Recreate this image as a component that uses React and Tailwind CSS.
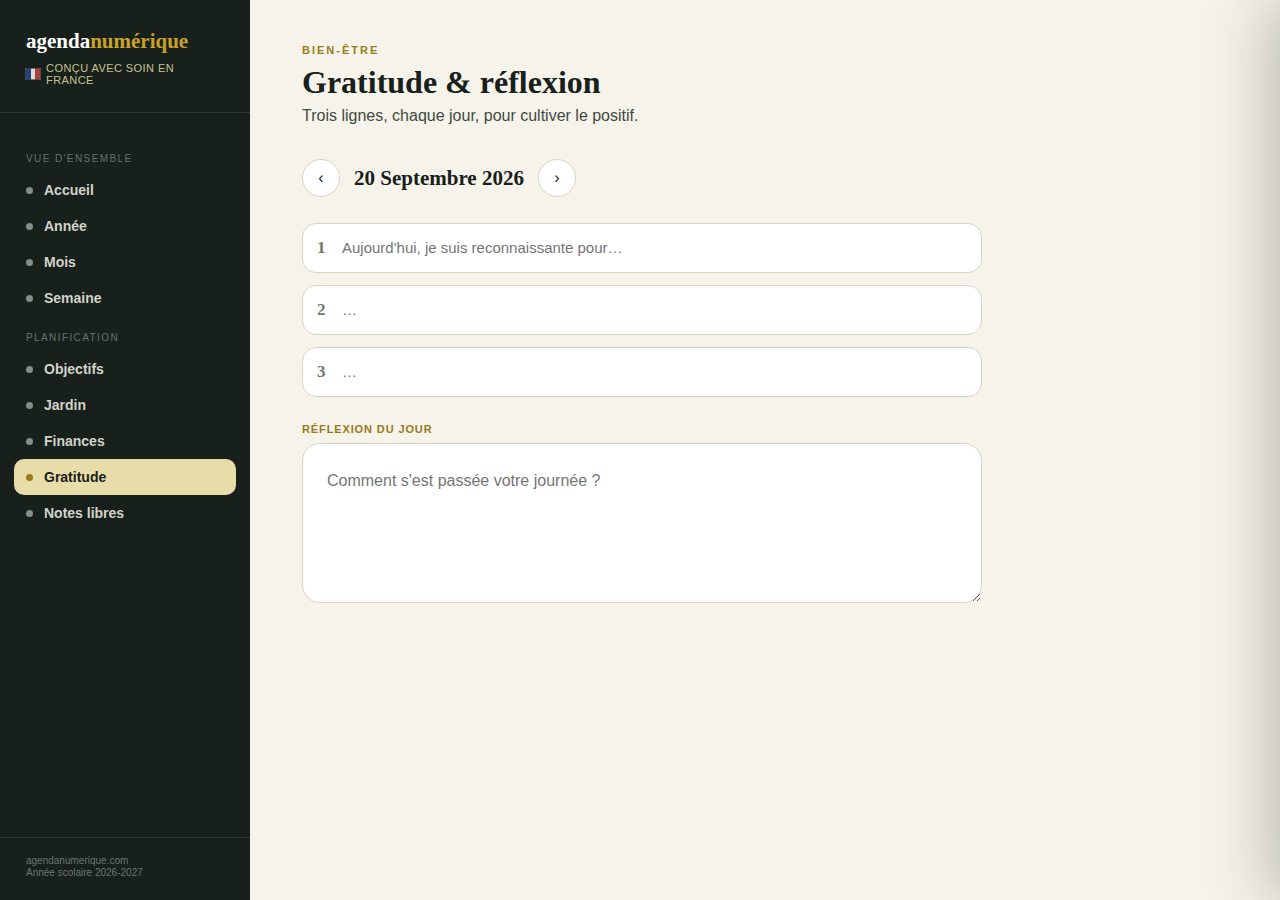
import { useState } from "react";

const sections = [
  { title: "Vue d'ensemble", items: ["Accueil", "Année", "Mois", "Semaine"] },
  {
    title: "Planification",
    items: ["Objectifs", "Jardin", "Finances", "Gratitude", "Notes libres"],
  },
];

const prompts = ["Aujourd'hui, je suis reconnaissante pour…", "…", "…"];

function Flag() {
  return (
    <svg width="16" height="12" viewBox="0 0 16 12" className="-ml-px shrink-0" aria-hidden="true">
      <defs>
        <clipPath id="flag-shape">
          <rect width="16" height="12" rx="2" />
        </clipPath>
      </defs>
      <g clipPath="url(#flag-shape)">
        <rect width="16" height="12" fill="#dcdcda" />
        <rect width="6" height="12" fill="#24427c" />
        <rect x="10" width="6" height="12" fill="#a8423f" />
        <rect x="0.5" y="0.5" width="15" height="11" rx="1.5" fill="none" stroke="#3c4a4c" strokeOpacity="0.7" />
      </g>
    </svg>
  );
}

function NavItem({ label, active, onSelect }) {
  return (
    <a
      href="#"
      aria-current={active ? "page" : undefined}
      onClick={(event) => {
        event.preventDefault();
        onSelect(label);
      }}
      className={
        active
          ? "flex h-9 items-center gap-[11px] rounded-[10px] bg-[#e8dca8] px-3 text-sm font-bold text-[#18211c]"
          : "flex h-9 items-center gap-[11px] rounded-[10px] px-3 text-sm font-bold text-[#d1d3cb]"
      }
    >
      <span
        className={
          active
            ? "size-[7px] rounded-full bg-[#9a7b1a]"
            : "size-[7px] rounded-full bg-[#868c86]"
        }
      />
      {label}
    </a>
  );
}

function Sidebar() {
  const [current, setCurrent] = useState("Gratitude");
  return (
    <aside className="sticky top-0 flex h-screen w-[250px] shrink-0 flex-col bg-[#17201b]">
      <div className="border-b border-[#2f3832] px-[26px] pt-7 pb-[26px]">
        <div className="font-['Liberation_Serif',serif] text-[21px] leading-[26px] font-bold text-white">
          agenda<span className="text-[#c9a227]">numérique</span>
        </div>
        <div className="mt-2 flex items-center gap-[5px] text-[11px] leading-3 tracking-[0.04em] text-[#c9c08f] uppercase">
          <Flag />
          <span>Conçu avec soin en France</span>
        </div>
      </div>
      <nav className="flex flex-1 flex-col gap-3.5 px-3.5 pt-[38px]">
        {sections.map((section) => (
          <div key={section.title}>
            <h2 className="mb-1.5 px-3 text-[10px] leading-[15px] tracking-[0.14em] text-[#69716b] uppercase">
              {section.title}
            </h2>
            {section.items.map((item) => (
              <NavItem key={item} label={item} active={item === current} onSelect={setCurrent} />
            ))}
          </div>
        ))}
      </nav>
      <div className="border-t border-[#2f3832] px-[26px] pt-[17px] pb-[21px] text-[10px] leading-3 text-[#6d756f]">
        <p>agendanumerique.com</p>
        <p>Année scolaire 2026-2027</p>
      </div>
    </aside>
  );
}

function DayButton({ label, onClick, children }) {
  return (
    <button
      type="button"
      aria-label={label}
      onClick={onClick}
      className="flex size-[38px] items-center justify-center rounded-full border border-[#d9d4c5] bg-white text-base text-[#18211c]"
    >
      {children}
    </button>
  );
}

const months = [
  "Janvier", "Février", "Mars", "Avril", "Mai", "Juin",
  "Juillet", "Août", "Septembre", "Octobre", "Novembre", "Décembre",
];

export default function App() {
  const [day, setDay] = useState(new Date(2026, 8, 20));
  const shift = (n) => setDay(new Date(day.getFullYear(), day.getMonth(), day.getDate() + n));

  return (
    <div className="flex min-h-screen bg-[#f6f3ea] font-['Liberation_Sans',Arial,sans-serif] text-[#17201b]">
      <Sidebar />
      <main className="min-w-0 flex-1 px-[52px] pt-11 pb-20">
        <p className="text-[11px] leading-3 font-bold tracking-[2px] text-[#9a7b1a] uppercase">
          Bien-être
        </p>
        <h1 className="mt-2 font-['Liberation_Serif',serif] text-[32px] leading-[37px] font-bold">
          Gratitude &amp; réflexion
        </h1>
        <p className="mt-1.5 text-base leading-[18px] text-[#3f4a43]">
          Trois lignes, chaque jour, pour cultiver le positif.
        </p>

        <div className="mt-[34px] flex items-center gap-3.5">
          <DayButton label="Jour précédent" onClick={() => shift(-1)}>‹</DayButton>
          <span className="font-['Liberation_Serif',serif] text-[21px] leading-6 font-bold">
            {day.getDate()} {months[day.getMonth()]} {day.getFullYear()}
          </span>
          <DayButton label="Jour suivant" onClick={() => shift(1)}>›</DayButton>
        </div>

        <div className="mt-[26px] flex max-w-[680px] flex-col gap-3">
          {prompts.map((prompt, index) => (
            <label
              key={index}
              className="flex h-[50px] items-center gap-4 rounded-[14px] border border-[#d9d4c5] bg-white px-3.5"
            >
              <span className="w-[9px] font-['Liberation_Serif',serif] text-[17px] leading-5 font-bold text-[#6d7a70]">
                {index + 1}
              </span>
              <input
                type="text"
                placeholder={prompt}
                className="min-w-0 flex-1 bg-transparent text-[15px] outline-none placeholder:text-[#757575]"
              />
            </label>
          ))}
        </div>

        <div className="mt-[26px] flex max-w-[680px] flex-col gap-2">
          <label
            htmlFor="reflexion"
            className="text-[11px] leading-3 font-bold tracking-[0.08em] text-[#9a7b1a] uppercase"
          >
            Réflexion du jour
          </label>
          <textarea
            id="reflexion"
            placeholder="Comment s'est passée votre journée ?"
            className="block h-40 w-full resize-y rounded-[18px] border border-[#d9d4c5] bg-white p-6 text-base leading-[26px] outline-none placeholder:text-[#757575]"
          />
        </div>
      </main>
      <div
        aria-hidden="true"
        className="fixed inset-y-0 left-full w-[420px] bg-white shadow-[-10px_0_60px_rgba(24,33,40,0.28)]"
      />
    </div>
  );
}
